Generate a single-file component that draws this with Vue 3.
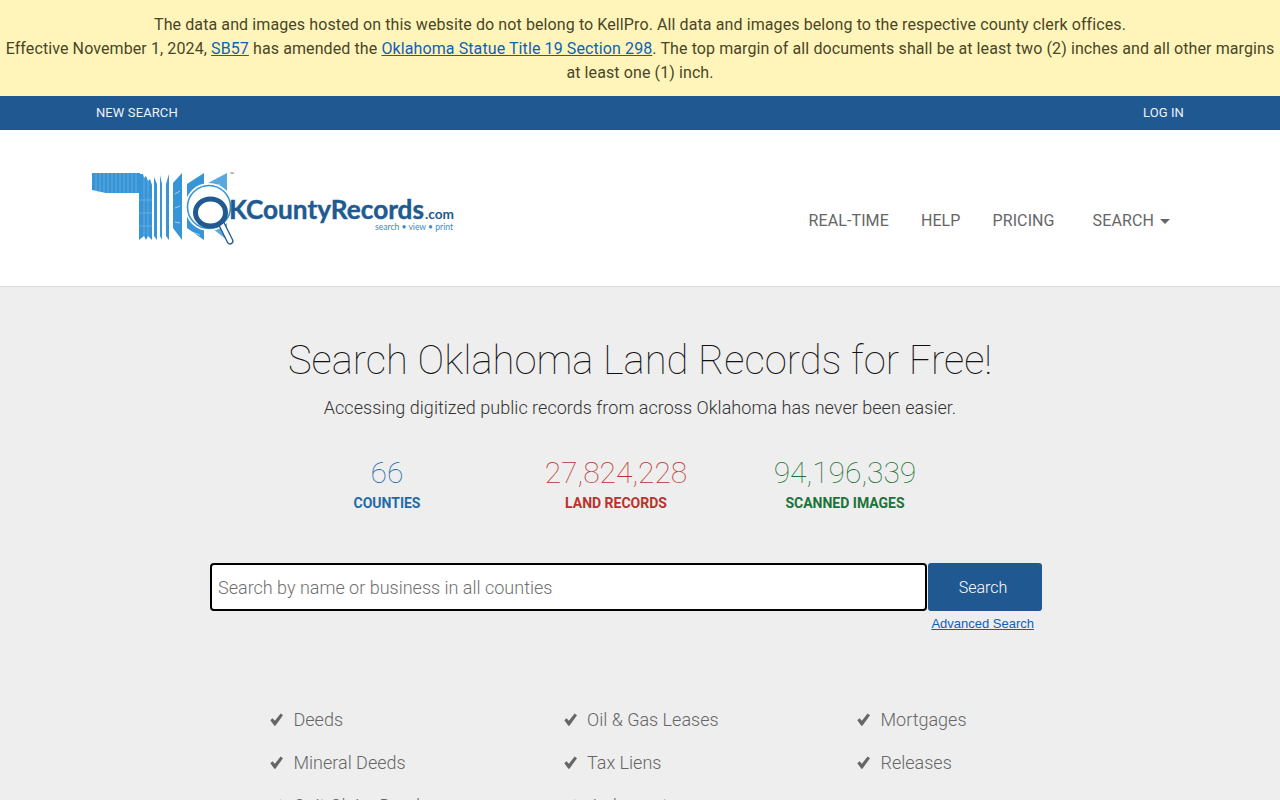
<template>
  <div class="page">
    <div class="notice">
      <p>The data and images hosted on this website do not belong to KellPro. All data and images belong to the respective county clerk offices.</p>
      <p>Effective November 1, 2024, <a href="#">SB57</a> has amended the <a href="#">Oklahoma Statue Title 19 Section 298</a>. The top margin of all documents shall be at least two (2) inches and all other margins at least one (1) inch.</p>
    </div>

    <div class="topbar">
      <a href="#">NEW SEARCH</a>
      <a href="#">LOG IN</a>
    </div>

    <header class="header">
      <svg class="logo" width="390" height="95" viewBox="80 160 390 95">
        <!-- state outline made of thin pages -->
        <g fill="#3794d6">
          <polygon points="92,173 140,173 140,193 106,193 92,190" />
          <polygon points="139,174 143,174 144,178 146,176 148,181 150,179 152,185 152,240 148,236 146,240 144,236 139,240" />
          <polygon points="154,177 157,184 157,240 154,236" />
          <polygon points="160,175 162,184 162,240 160,236" />
          <polygon points="169,174 169,240 166,236 166,184" />
          <polygon points="182,173 182,240 173,228 173,183" />
          <polygon points="204,173 204,240 187,228 187,184" />
          <polygon points="227,173 227,240 208,225 208,183" fill="#59a9de" />
        </g>
        <g stroke="#fff" stroke-width=".6" opacity=".35">
          <path d="M96 173v18M100 173v18M104 173v19M108 173v20M112 173v20M116 173v20M120 173v20M124 173v20M128 173v20M132 173v20M136 173v20" />
          <path d="M144 178v58M148 181v55M139 200h13M139 213h13M139 226h13" />
        </g>
        <g stroke="#fff" stroke-width=".8" opacity=".7">
          <path d="M175 194l5-3M175 208l5-2M175 222l5 1M190 193l8-4M208 190l12-6M192 232l8 3" />
        </g>
        <circle cx="209" cy="207" r="24" fill="#fff" />
        <rect x="228" y="184" width="4" height="60" fill="#fff" />
        <circle cx="209" cy="207" r="21.5" fill="#fff" stroke="#3a95d3" stroke-width="1.6" />
        <path d="M222 225l8 16" stroke="#205a90" stroke-width="7" stroke-linecap="round" />
        <path d="M222 225l8 16" stroke="#fff" stroke-width="4.4" stroke-linecap="round" />
        <ellipse cx="210.5" cy="212.5" rx="15" ry="13.5" fill="#fff" stroke="#205a90" stroke-width="5" />
        <text class="logo-name" x="229" y="219" textLength="195" lengthAdjust="spacingAndGlyphs">KCountyRecords</text>
        <text class="logo-com" x="425" y="219" textLength="29" lengthAdjust="spacingAndGlyphs">.com</text>
        <text class="logo-tag" x="375" y="230" textLength="78" lengthAdjust="spacingAndGlyphs">search • view • print</text>
        <text class="logo-tm" x="230" y="176">™</text>
      </svg>
      <nav class="nav">
        <a href="#">REAL-TIME</a>
        <a href="#">HELP</a>
        <a href="#">PRICING</a>
        <a href="#" class="nav-search">SEARCH <span class="caret"></span></a>
      </nav>
    </header>

    <main class="main">
      <h1>Search Oklahoma Land Records for Free!</h1>
      <p class="lead">Accessing digitized public records from across Oklahoma has never been easier.</p>

      <div class="stats">
        <div v-for="s in stats" :key="s.label" class="stat" :class="s.cls">
          <div class="num">{{ s.num }}</div>
          <div class="label">{{ s.label }}</div>
        </div>
      </div>

      <form class="search" @submit.prevent>
        <div class="search-row">
          <input type="text" placeholder="Search by name or business in all counties">
          <button type="submit">Search</button>
        </div>
        <a href="#" class="advanced">Advanced Search</a>
      </form>

      <ul class="types">
        <li v-for="t in types" :key="t">
          <template v-if="t">
            <svg class="check" viewBox="0 0 12 12" width="13" height="13">
              <path fill="#666" d="M0.3 6.6 2.3 4.8 4.5 7.2 9.8 0.5 12 2 5 11.8 4 11.8Z" />
            </svg>
            <span>{{ t }}</span>
          </template>
        </li>
      </ul>
    </main>
  </div>
</template>

<script setup>
const stats = [
  { num: '66', label: 'COUNTIES', cls: 'blue' },
  { num: '27,824,228', label: 'LAND RECORDS', cls: 'red' },
  { num: '94,196,339', label: 'SCANNED IMAGES', cls: 'green' }
];

const types = [
  'Deeds', 'Oil & Gas Leases', 'Mortgages',
  'Mineral Deeds', 'Tax Liens', 'Releases',
  'Quit Claim Deeds', 'Judgments', ''
];
</script>

<style>
html, body {
  margin: 0;
  background: #eee;
}
</style>

<style scoped>
.page {
  font-family: Roboto, "Liberation Sans", sans-serif;
  color: #333;
}

.notice {
  height: 96px;
  box-sizing: border-box;
  padding-top: 13px;
  background: #fff5bb;
  color: #4a4526;
  font-size: 16px;
  line-height: 24px;
  letter-spacing: 0.1px;
  text-align: center;
}

.notice p {
  margin: 0;
}

.notice a {
  color: #0b62b5;
  text-decoration: underline;
}

.topbar {
  height: 33px;
  display: flex;
  justify-content: space-between;
  align-items: center;
  padding: 0 96px 1px;
  background: #205891;
}

.topbar a {
  color: #eef3f8;
  font-size: 13px;
  letter-spacing: 0.1px;
  text-decoration: none;
}

.header {
  height: 157px;
  box-sizing: border-box;
  display: flex;
  justify-content: space-between;
  padding-top: 30px;
  background: #fff;
  border-bottom: 1px solid #ddd;
}

.logo {
  margin-left: 80px;
}

.logo-name {
  font-family: Lato, sans-serif;
  font-weight: 700;
  font-size: 26px;
  fill: #205a90;
  stroke: #205a90;
  stroke-width: 0.4px;
}

.logo-com {
  font-family: Lato, sans-serif;
  font-weight: 700;
  font-size: 13px;
  fill: #205a90;
}

.logo-tag {
  font-family: Lato, sans-serif;
  font-size: 9.5px;
  fill: #3f87c2;
}

.logo-tm {
  font-family: "Open Sans", sans-serif;
  font-size: 5px;
  fill: #555;
}

.nav {
  display: flex;
  gap: 32px;
  padding: 51px 110px 0 0;
  font-size: 16px;
  line-height: 19px;
  letter-spacing: 0.1px;
}

.nav a {
  color: #666;
  text-decoration: none;
}

.nav-search {
  margin-left: 6px;
}

.caret {
  display: inline-block;
  margin-left: 2px;
  vertical-align: 2px;
  border-top: 5px solid #666;
  border-left: 5px solid transparent;
  border-right: 5px solid transparent;
}

.main {
  background: #eee;
  padding-top: 50px;
  text-align: center;
}

h1 {
  margin: 0;
  font-size: 40px;
  line-height: 48px;
  font-weight: 100;
  color: #111;
}

.lead {
  margin: 11px 0 0;
  font-size: 18px;
  line-height: 24px;
  font-weight: 300;
  letter-spacing: 0.03px;
}

.stats {
  display: flex;
  justify-content: center;
  margin: 34px 0 0 -48px;
}

.stat {
  width: 229px;
}

.num {
  font-size: 30px;
  line-height: 38px;
  font-weight: 100;
}

.label {
  margin-top: 1px;
  font-size: 14px;
  line-height: 20px;
  font-weight: 700;
}

.blue { color: #1f6ba8; }
.red { color: #bb322d; }
.green { color: #1b7339; }

.search {
  width: 832px;
  margin: 50px 0 0 210px;
  text-align: right;
}

.search-row {
  display: flex;
  gap: 1px;
}

.search input {
  flex: 1;
  min-width: 0;
  height: 48px;
  box-sizing: border-box;
  padding: 0 6px;
  border: 2px solid #000;
  border-radius: 4px;
  background: #fff;
  font-family: inherit;
  font-size: 18px;
  font-weight: 300;
  outline: none;
}

.search input::placeholder {
  color: #6f6f6f;
  opacity: 1;
}

.search button {
  width: 114px;
  height: 48px;
  border: 0;
  border-radius: 3px;
  background: #205891;
  color: #fff;
  font-family: inherit;
  font-size: 16px;
  font-weight: 300;
  padding: 0 4px 0 0;
}

.advanced {
  display: inline-block;
  margin: 5px 8px 0 0;
  color: #0b62b5;
  font-family: "Liberation Sans", sans-serif;
  font-size: 13px;
  line-height: 16px;
}

.types {
  display: grid;
  grid-template-columns: repeat(3, 293.5px);
  grid-auto-rows: 43px;
  width: 880px;
  margin: 66px 0 0 270px;
  padding: 0 0 40px;
  list-style: none;
  text-align: left;
}

.types li {
  display: flex;
  align-items: center;
  gap: 10.5px;
  height: 43px;
  font-size: 18px;
  font-weight: 300;
  color: #666;
}
</style>
